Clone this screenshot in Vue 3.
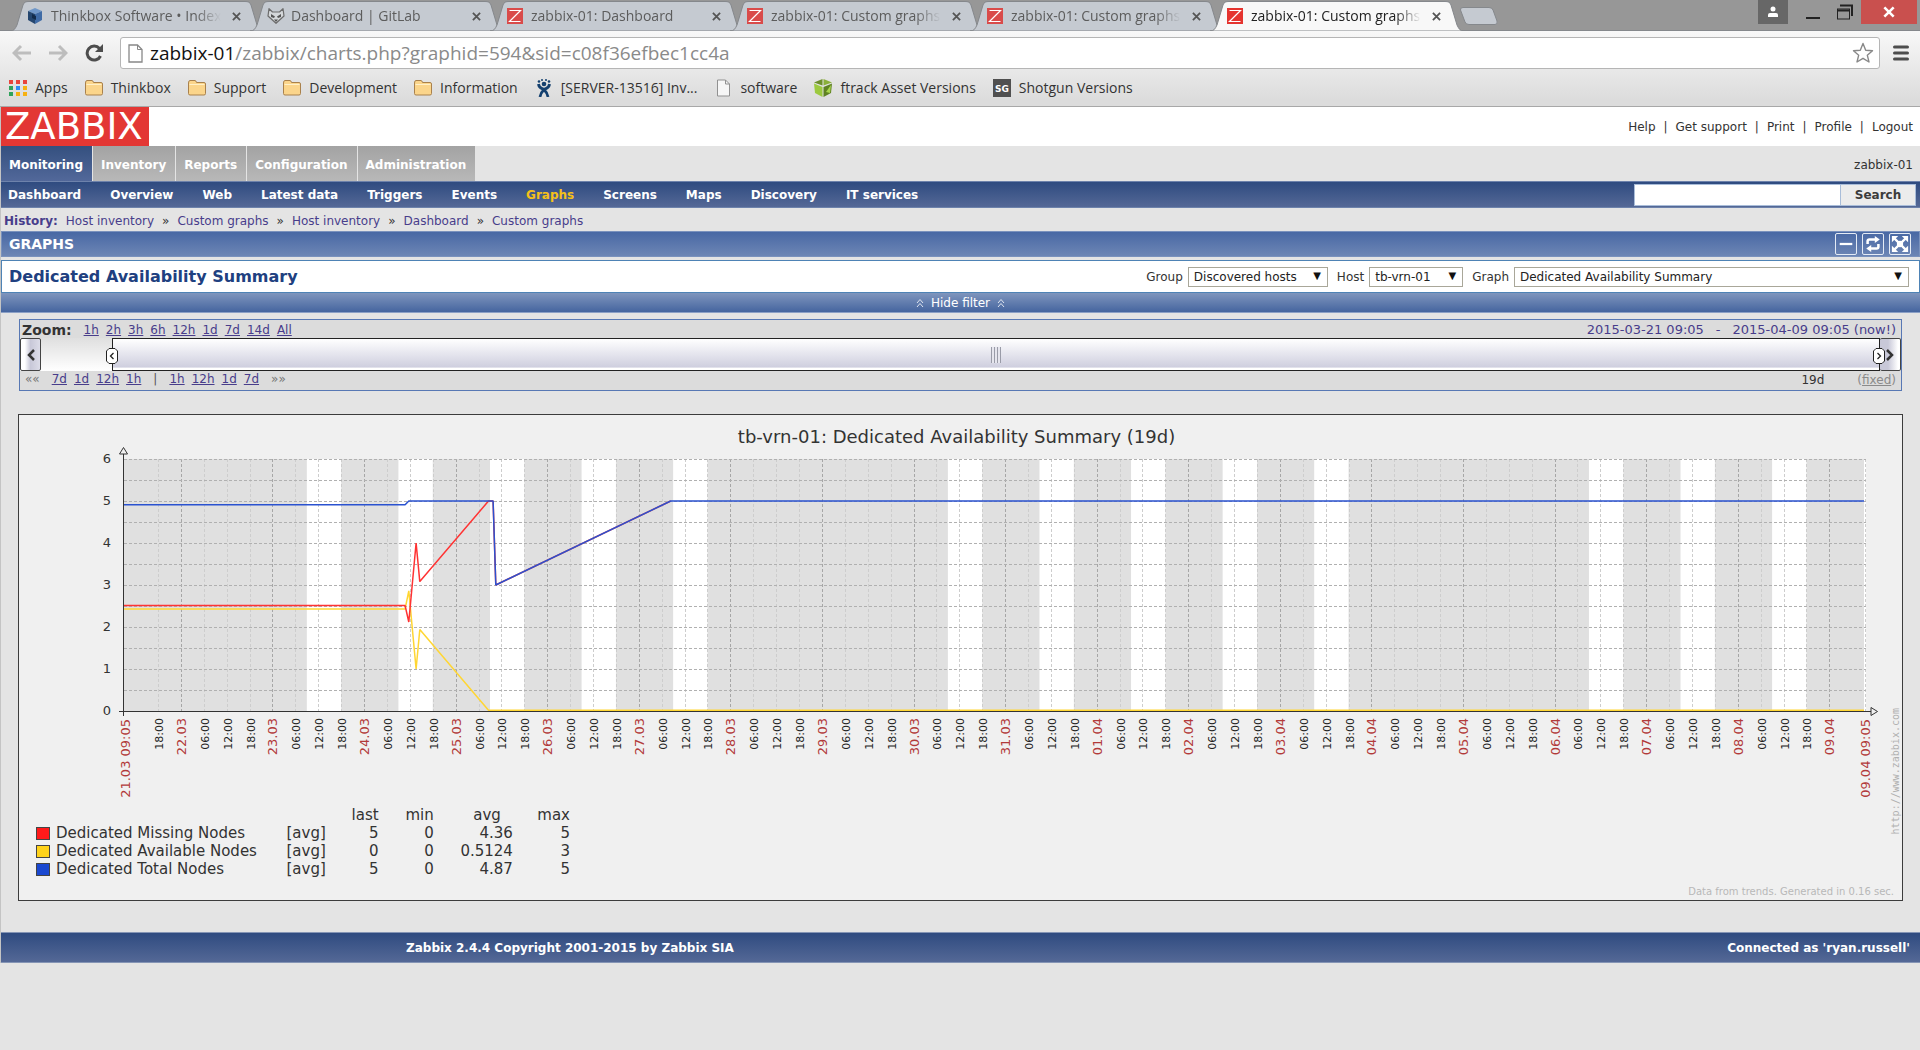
<script setup>
import { ref } from 'vue'

const tabs = [
  { title: 'Thinkbox Software • Index', icon: 'cube' },
  { title: 'Dashboard | GitLab', icon: 'gitlab' },
  { title: 'zabbix-01: Dashboard', icon: 'z' },
  { title: 'zabbix-01: Custom graphs', icon: 'z' },
  { title: 'zabbix-01: Custom graphs', icon: 'z' },
  { title: 'zabbix-01: Custom graphs', icon: 'z', active: true },
]

const bookmarks = [
  { label: 'Apps', icon: 'apps' },
  { label: 'Thinkbox', icon: 'folder' },
  { label: 'Support', icon: 'folder' },
  { label: 'Development', icon: 'folder' },
  { label: 'Information', icon: 'folder' },
  { label: '[SERVER-13516] Inv...', icon: 'jira' },
  { label: 'software', icon: 'page' },
  { label: 'ftrack Asset Versions', icon: 'ftrack' },
  { label: 'Shotgun Versions', icon: 'sg' },
]

const userLinks = ['Help', 'Get support', 'Print', 'Profile', 'Logout']
const sections = ['Monitoring', 'Inventory', 'Reports', 'Configuration', 'Administration']
const pages = [
  'Dashboard', 'Overview', 'Web', 'Latest data', 'Triggers', 'Events',
  'Graphs', 'Screens', 'Maps', 'Discovery', 'IT services',
]
const history = ['Host inventory', 'Custom graphs', 'Host inventory', 'Dashboard', 'Custom graphs']

const zoomLevels = ['1h', '2h', '3h', '6h', '12h', '1d', '7d', '14d', 'All']
const stepsBack = ['7d', '1d', '12h', '1h']
const stepsForward = ['1h', '12h', '1d', '7d']

const search = ref('')

/* Chart geometry: 19 days starting 21.03 09:05, values 0 to 6 */
const left = 105
const top = 14
const plotWidth = 1740
const unit = 42
const days = 19
const bottom = top + unit * 6
const startOffset = (9 + 5 / 60) / 24

const x = (d) => left + (d * plotWidth) / days
const y = (v) => bottom - v * unit
const snap = (n) => Math.round(n) + 0.5

const dateLabel = (n) => {
  const day = 21 + n
  return day > 31 ? `${String(day - 31).padStart(2, '0')}.04` : `${day}.03`
}

const ticks = []
for (let n = 0; n <= 19; n++) {
  for (const hour of [0, 6, 12, 18]) {
    const at = n + hour / 24 - startOffset
    if (at < 0.2 || at > 18.8) continue
    ticks.push({ at, major: hour === 0, label: hour ? `${String(hour).padStart(2, '0')}:00` : dateLabel(n) })
  }
}

const workDays = [2, 3, 4, 5, 6, 9, 10, 11, 12, 13, 16, 17, 18]
const workBands = workDays.map((n) => ({
  x: x(n + 9 / 24 - startOffset),
  width: (plotWidth / days) * (9 / 24),
}))

const levels = Array.from({ length: 12 }, (_, i) => (i + 1) / 2)

const line = (points) => points.map(([d, v]) => `${x(d).toFixed(1)},${y(v).toFixed(1)}`).join(' ')

const missing = line([[0, 2.51], [3.07, 2.51], [3.11, 2.12], [3.19, 4], [3.23, 3.08], [3.98, 5], [4.03, 5], [4.06, 3], [5.97, 5]])
const available = line([[0, 2.43], [3.07, 2.43], [3.11, 2.86], [3.19, 1], [3.23, 1.94], [3.98, 0.02], [19, 0.02]])
const total = line([[0, 4.91], [3.07, 4.91], [3.11, 5], [4.03, 5], [4.06, 3], [5.97, 5], [19, 5]])

const legend = [
  { name: 'Dedicated Missing Nodes', color: 'red', last: '5', min: '0', avg: '4.36', max: '5' },
  { name: 'Dedicated Available Nodes', color: 'yellow', last: '0', min: '0', avg: '0.5124', max: '3' },
  { name: 'Dedicated Total Nodes', color: 'blue', last: '5', min: '0', avg: '4.87', max: '5' },
]
</script>

<template>
  <div class="window">
    <header class="chrome">
      <div class="tabstrip">
        <div class="tabs">
          <div v-for="(tab, i) in tabs" :key="i" class="tab" :class="{ active: tab.active }">
            <svg class="tab-shape" viewBox="0 0 254 30" preserveAspectRatio="none" aria-hidden="true">
              <path d="M0 30C4 30 5 28 7 24L13 4C14 1 16 .5 19 .5H235C238 .5 240 1 241 4L247 24C249 28 250 30 254 30Z" />
            </svg>
            <svg v-if="tab.icon === 'cube'" class="fav" viewBox="0 0 16 16" aria-hidden="true">
              <path d="M8 0 15 3 8 6 1 3Z" fill="#6f97c9" />
              <path d="M1 3 8 6V16L1 12Z" fill="#24466f" />
              <path d="M15 3 8 6V16L15 12Z" fill="#3f6ba6" />
              <path d="M5 6 9 8V12L5 10Z" fill="#122b4a" />
            </svg>
            <svg v-else-if="tab.icon === 'gitlab'" class="fav wide" viewBox="0 0 18 16" aria-hidden="true">
              <path d="M2 .7 5.500 4H12.500L16 .7 17 8 9 15.300 1 8Z" fill="#d4d7da" stroke="#6c6c6c" stroke-width="1.200" stroke-linejoin="round" />
              <path d="M4 6 8 8.500 7 10 4 9ZM14 6 10 8.500 11 10 14 9ZM7 11.500H11L9 14Z" fill="#555" />
            </svg>
            <svg v-else class="fav" viewBox="0 0 16 16" aria-hidden="true">
              <rect width="16" height="16" :fill="tab.active ? '#e5342f' : '#d94b4a'" />
              <path d="M2.500 2.500H13.500L2.500 13.500H13.500" fill="none" stroke="#fff" stroke-width="1.200" />
            </svg>
            <span class="tab-title">{{ tab.title }}</span>
            <button class="tab-close" type="button" aria-label="Close tab">
              <svg viewBox="0 0 10 10"><path d="M1 1 9 9M9 1 1 9" stroke="#555" stroke-width="2" /></svg>
            </button>
          </div>
          <button class="new-tab" type="button" aria-label="New tab">
            <svg viewBox="0 0 40 20"><path d="M4 1.500H30Q33 1.500 34 4L38 15Q39 18.500 36 18.500H10Q7 18.500 6 16L1.500 4Q1 1.500 4 1.500Z" fill="#c5cad1" stroke="#85888c" /></svg>
          </button>
        </div>
        <div class="controls">
          <button class="user" type="button" aria-label="User">
            <svg viewBox="0 0 12 12"><circle cx="6" cy="3" r="2.500" fill="#fff" /><path d="M1 11V9Q1 7 3 7H9Q11 7 11 9V11Z" fill="#fff" /></svg>
          </button>
          <button class="min" type="button" aria-label="Minimize">
            <svg viewBox="0 0 14 14"><path d="M0 12H14" stroke="#222" stroke-width="2" /></svg>
          </button>
          <button class="max" type="button" aria-label="Restore">
            <svg viewBox="0 0 16 16"><path d="M3 1.500H15V12M1 6.500H12" fill="none" stroke="#222" stroke-width="2" /><rect x=".5" y="5" width="12" height="10" fill="none" stroke="#222" /></svg>
          </button>
          <button class="close" type="button" aria-label="Close">
            <svg viewBox="0 0 12 12"><path d="M2 2 10 10M10 2 2 10" stroke="#fff" stroke-width="2.200" /></svg>
          </button>
        </div>
      </div>

      <div class="toolbar">
        <button class="nav" type="button" aria-label="Back">
          <svg viewBox="0 0 20 18"><path d="M9 2 2 9 9 16M2 9H19" fill="none" stroke="#bdbdbd" stroke-width="3" /></svg>
        </button>
        <button class="nav" type="button" aria-label="Forward">
          <svg viewBox="0 0 20 18"><path d="M11 2 18 9 11 16M18 9H1" fill="none" stroke="#bdbdbd" stroke-width="3" /></svg>
        </button>
        <button class="nav" type="button" aria-label="Reload">
          <svg viewBox="0 0 20 18"><path d="M15.500 4.500A7 7 0 1 0 16.500 12" fill="none" stroke="#4d4d4d" stroke-width="3" /><path d="M19 0V8H11Z" fill="#4d4d4d" /></svg>
        </button>
        <div class="url">
          <svg class="doc" viewBox="0 0 15 19" aria-hidden="true"><path d="M1 1H9.500L14 5.500V18H1Z" fill="#fff" stroke="#888" stroke-width="1.300" /><path d="M9.500 1V5.500H14" fill="none" stroke="#888" /></svg>
          <span class="address"><b>zabbix-01</b>/zabbix/charts.php?graphid=594&amp;sid=c08f36efbec1cc4a</span>
          <svg class="star" viewBox="0 0 22 22" aria-hidden="true"><path d="M11 1.500 13.700 8.300 20.500 8.800 15.300 13.200 17 20 11 16.300 5 20 6.700 13.200 1.500 8.800 8.300 8.300Z" fill="#fff" stroke="#888" stroke-width="1.400" stroke-linejoin="round" /></svg>
        </div>
        <button class="menu" type="button" aria-label="Menu">
          <svg viewBox="0 0 16 16"><path d="M1.500 2H14.500M1.500 8H14.500M1.500 14H14.500" stroke="#4d4d4d" stroke-width="3" stroke-linecap="round" /></svg>
        </button>
      </div>

      <nav class="bookmarks">
        <a v-for="b in bookmarks" :key="b.label" href="#">
          <svg v-if="b.icon === 'apps'" viewBox="0 0 18 18">
            <path d="M0 1H4V5H0ZM7 1H11V5H7ZM14 1H18V5H14Z" fill="#e8453c" />
            <path d="M0 7H4V11H0ZM0 13H4V17H0Z" fill="#2fa35b" />
            <path d="M7 7H11V11H7Z" fill="#2f8df5" />
            <path d="M14 7H18V11H14ZM7 13H11V17H7ZM14 13H18V17H14Z" fill="#f6b111" />
          </svg>
          <svg v-else-if="b.icon === 'folder'" viewBox="0 0 18 18">
            <path d="M.5 4Q.5 1.500 2 1.500H7Q8 1.500 8.500 3.500H16Q17.500 3.500 17.500 5V14.500Q17.500 16 16 16H2Q.5 16 .5 14.500Z" fill="#fbd58b" stroke="#a9814c" />
            <path d="M1.500 5.500H16.500" stroke="#fff0c8" />
          </svg>
          <svg v-else-if="b.icon === 'jira'" viewBox="0 0 18 18">
            <g fill="#14406f"><circle cx="9" cy="5" r="2.300" /><circle cx="4" cy="2.500" r="1.300" /><circle cx="7" cy="1" r="1" /><circle cx="11" cy="1" r="1" /><circle cx="14" cy="2.500" r="1.300" /></g>
            <path d="M3.500 5C4 9.500 6.500 9 9 10.500C11.500 9 14 9.500 14.500 5M9 10.500C6.500 13 5.500 14 5 18M9 10.500C11.500 13 12.500 14 13 18" fill="none" stroke="#14406f" stroke-width="2.800" />
          </svg>
          <svg v-else-if="b.icon === 'page'" viewBox="0 0 18 18"><path d="M3.500 1H11.500L15.500 5V17H3.500Z" fill="#f6f6f6" stroke="#919191" /><path d="M11.500 1V5H15.500" fill="none" stroke="#919191" /></svg>
          <svg v-else-if="b.icon === 'ftrack'" viewBox="0 0 18 18">
            <path d="M8.500 0V6.500L0 3.500Z" fill="#6d8f2b" /><path d="M9.500 0V6.500L18 3.500Z" fill="#8bb03a" />
            <path d="M0 4.500 8.500 8V18L1 14Z" fill="#9cc93f" /><path d="M18 4.500 9.500 8V18L17 14Z" fill="#5f8222" /><path d="M17 6 12 13 16 14Z" fill="#a9d64c" />
          </svg>
          <svg v-else viewBox="0 0 20 20"><rect width="20" height="20" fill="#505050" /><text x="10" y="14" text-anchor="middle" class="sg">SG</text></svg>
          {{ b.label }}
        </a>
      </nav>
    </header>

    <main class="page">
      <div class="masthead">
        <a class="logo" href="#">ZABBIX</a>
        <nav class="user-links">
          <template v-for="(l, i) in userLinks" :key="l">
            <span v-if="i">|</span><a href="#">{{ l }}</a>
          </template>
        </nav>
      </div>

      <nav class="sections">
        <a v-for="(s, i) in sections" :key="s" href="#" :class="{ on: i === 0 }">{{ s }}</a>
        <span class="host">zabbix-01</span>
      </nav>

      <div class="subnav">
        <nav>
          <a v-for="p in pages" :key="p" href="#" :class="{ on: p === 'Graphs' }">{{ p }}</a>
        </nav>
        <form class="search" @submit.prevent>
          <input v-model="search" type="text" aria-label="Search" />
          <button type="submit">Search</button>
        </form>
      </div>

      <nav class="history">
        <b>History:</b>
        <template v-for="(h, i) in history" :key="i">
          <span v-if="i">»</span><a href="#">{{ h }}</a>
        </template>
      </nav>

      <div class="bar">
        <h1>GRAPHS</h1>
        <div class="bar-icons">
          <button type="button" aria-label="Hide menu"><svg viewBox="0 0 20 20"><path d="M3 10H17" stroke="#fff" stroke-width="2.500" /></svg></button>
          <button type="button" aria-label="Refresh"><svg viewBox="0 0 20 20"><path d="M4 10V7Q4 5 6 5H13M16 10V13Q16 15 14 15H7" fill="none" stroke="#fff" stroke-width="2.800" /><path d="M12 1 17.500 5 12 9ZM8 11 2.500 15 8 19Z" fill="#fff" /></svg></button>
          <button type="button" aria-label="Fullscreen"><svg viewBox="0 0 20 20"><path d="M1 1H8L1 8ZM19 1H12L19 8ZM1 19H8L1 12ZM19 19H12L19 12Z" fill="#fff" /><path d="M4 4 16 16M16 4 4 16" stroke="#fff" stroke-width="2.500" /><circle cx="10" cy="10" r="3.500" fill="#fff" /></svg></button>
        </div>
      </div>

      <div class="title-row">
        <h2>Dedicated Availability Summary</h2>
        <form class="pickers" @submit.prevent>
          <label for="group">Group</label>
          <span class="pick group"><select id="group"><option>Discovered hosts</option></select><i>▼</i></span>
          <label for="host">Host</label>
          <span class="pick host-pick"><select id="host"><option>tb-vrn-01</option></select><i>▼</i></span>
          <label for="graph">Graph</label>
          <span class="pick graph"><select id="graph"><option>Dedicated Availability Summary</option></select><i>▼</i></span>
        </form>
      </div>

      <button class="filter-toggle" type="button">
        <svg viewBox="0 0 8 10"><path d="M1 5 4 1.500 7 5M1 9 4 5.500 7 9" fill="none" stroke="#dfe5f0" /></svg>
        Hide filter
        <svg viewBox="0 0 8 10"><path d="M1 5 4 1.500 7 5M1 9 4 5.500 7 9" fill="none" stroke="#dfe5f0" /></svg>
      </button>

      <section class="timeline">
        <div class="zoom-row">
          <b>Zoom:</b>
          <a v-for="z in zoomLevels" :key="z" href="#">{{ z }}</a>
          <span class="range">
            <span>2015-03-21 09:05</span><span>-</span><span>2015-04-09 09:05 (now!)</span>
          </span>
        </div>
        <div class="slider">
          <button class="end start" type="button" aria-label="Earlier"><svg viewBox="0 0 10 14"><path d="M8 2 3 7 8 12" fill="none" stroke="#333" stroke-width="2.500" /></svg></button>
          <div class="thumb">
            <svg class="handle at-start" viewBox="0 0 12 16"><path d="M3 .5H9L11.500 3V13L9 15.500H3L.5 13V3Z" fill="#fff" stroke="#222" /><path d="M7.500 5 4.500 8 7.500 11" fill="none" stroke="#222" stroke-width="1.300" /></svg>
            <span class="grip"></span>
            <svg class="handle at-end" viewBox="0 0 12 16"><path d="M3 .5H9L11.500 3V13L9 15.500H3L.5 13V3Z" fill="#fff" stroke="#222" /><path d="M4.500 5 7.500 8 4.500 11" fill="none" stroke="#222" stroke-width="1.300" /></svg>
          </div>
          <button class="end stop" type="button" aria-label="Later"><svg viewBox="0 0 10 14"><path d="M2 2 7 7 2 12" fill="none" stroke="#333" stroke-width="2.500" /></svg></button>
        </div>
        <div class="step-row">
          <span class="arrows">««</span>
          <a v-for="s in stepsBack" :key="s" href="#">{{ s }}</a>
          <span class="sep">|</span>
          <a v-for="s in stepsForward" :key="s" href="#">{{ s }}</a>
          <span class="arrows">»»</span>
          <span class="span-length">19d</span>
          <span class="fixed">(<a href="#">fixed</a>)</span>
        </div>
      </section>

      <figure class="chart">
        <figcaption>tb-vrn-01: Dedicated Availability Summary (19d)</figcaption>
        <svg class="plot" viewBox="0 0 1883 361">
          <rect :x="left" :y="top" :width="plotWidth" :height="bottom - top" fill="#e0e0e0" />
          <rect v-for="(b, i) in workBands" :key="'b' + i" :x="b.x" :y="top" :width="b.width" :height="bottom - top" fill="#fff" />
          <rect :x="left + plotWidth" :y="top" width="2" :height="bottom - top" fill="#fff" />
          <line v-for="(t, i) in ticks" :key="'g' + i" :x1="snap(x(t.at))" :x2="snap(x(t.at))" :y1="top" :y2="bottom" :class="t.major ? 'grid-day' : 'grid-hour'" />
          <line :x1="left + plotWidth + 1.5" :x2="left + plotWidth + 1.5" :y1="top" :y2="bottom" class="grid-hour" />
          <line v-for="v in levels" :key="'l' + v" :x1="left" :x2="left + plotWidth + 2" :y1="snap(y(v))" :y2="snap(y(v))" class="grid-level" />

          <polyline :points="available" class="series yellow" />
          <polyline :points="missing" class="series red" />
          <polyline :points="total" class="series blue" />

          <path :d="`M${left - 0.5} 8V${bottom + 5}M${left - 5} ${bottom + 0.5}H${left + plotWidth + 8}`" class="axis" />
          <path :d="`M${left - 4.5} 9 ${left - 0.5} 2.500 ${left + 3.5} 9Z`" class="arrow" />
          <path :d="`M${left + plotWidth + 7} ${bottom - 3.5}L${left + plotWidth + 13.5} ${bottom + 0.5}L${left + plotWidth + 7} ${bottom + 4.5}Z`" class="arrow" />

          <text v-for="v in [0, 1, 2, 3, 4, 5, 6]" :key="'v' + v" :x="left - 13" :y="y(v) + 4" class="value">{{ v }}</text>
          <text v-for="(t, i) in ticks" :key="'t' + i" :transform="`translate(${Math.round(x(t.at)) + 5} 273) rotate(-90)`" :class="t.major ? 'date' : 'hour'">{{ t.label }}</text>
          <text :transform="`translate(${left + 6} 274) rotate(-90)`" class="date">21.03 09:05</text>
          <text :transform="`translate(${left + plotWidth + 6} 274) rotate(-90)`" class="date">09.04 09:05</text>
          <text transform="translate(1880 263) rotate(-90)" class="source">http://www.zabbix.com</text>
        </svg>
        <table class="legend">
          <thead>
            <tr><td></td><td></td><th>last</th><th>min</th><th class="avg-head">avg</th><th>max</th></tr>
          </thead>
          <tbody>
            <tr v-for="r in legend" :key="r.name">
              <td><span class="swatch" :class="r.color"></span>{{ r.name }}</td>
              <td>[avg]</td>
              <td>{{ r.last }}</td><td>{{ r.min }}</td><td>{{ r.avg }}</td><td>{{ r.max }}</td>
            </tr>
          </tbody>
        </table>
        <p class="note">Data from trends. Generated in 0.16 sec.</p>
      </figure>

      <footer>
        <span class="copyright">Zabbix 2.4.4 Copyright 2001-2015 by Zabbix SIA</span>
        <span>Connected as 'ryan.russell'</span>
      </footer>
    </main>
  </div>
</template>

<style>
body {
  margin: 0;
  background: #e4e4e4;
}
</style>

<style scoped>
* {
  box-sizing: border-box;
}
button {
  border: 0;
  padding: 0;
  background: none;
  display: flex;
  align-items: center;
  justify-content: center;
}
svg {
  display: block;
  flex: none;
}
a {
  color: inherit;
  text-decoration: none;
}
.window {
  min-height: 100vh;
  background: #e4e4e4;
  font: 12px/16px "DejaVu Sans", Verdana, sans-serif;
  color: #333;
}

/* Browser frame */
.chrome {
  font-family: "Open Sans", "Segoe UI", sans-serif;
  font-size: 14px;
  background: linear-gradient(#f8f8f8 31px, #dcdcdc 100px);
  border-bottom: 1px solid #a8a8a8;
}
.tabstrip {
  display: flex;
  justify-content: space-between;
  height: 31px;
  background: #979797;
  border-bottom: 1px solid #85888c;
}
.tabs {
  display: flex;
  flex: 1;
  min-width: 0;
  padding: 1px 0 0 10px;
}
.tab {
  position: relative;
  display: flex;
  align-items: center;
  flex: 0 1 240px;
  min-width: 0;
  height: 30px;
  padding: 0 4px 0 17px;
  color: #5c5c5c;
}
.tab.active {
  z-index: 1;
  color: #222;
}
.tab-shape {
  position: absolute;
  left: 0;
  top: 0;
  width: calc(100% + 14px);
  height: 30px;
}
.tab-shape path {
  fill: #c5cad1;
  stroke: #85888c;
}
.active .tab-shape path {
  fill: #f8f8f8;
}
.fav {
  position: relative;
  width: 16px;
  height: 16px;
  margin-right: 8px;
}
.fav.wide {
  width: 18px;
  margin-right: 6px;
}
.tab-title {
  position: relative;
  flex: 1;
  min-width: 0;
  margin-right: 5px;
  overflow: hidden;
  white-space: nowrap;
  line-height: 20px;
  mask-image: linear-gradient(90deg, #000 85%, transparent);
}
.tab-close {
  position: relative;
  width: 20px;
  height: 16px;
}
.tab-close svg {
  width: 9px;
  height: 9px;
}
.new-tab {
  width: 40px;
  height: 30px;
  margin-left: 9px;
}
.new-tab svg {
  width: 40px;
  height: 20px;
}
.controls {
  display: flex;
  margin-right: 3px;
}
.controls button {
  height: 24px;
}
.controls svg {
  width: 14px;
  height: 14px;
}
.controls .user {
  width: 30px;
  background: #676767;
}
.controls .user svg {
  width: 12px;
}
.controls .min {
  width: 49px;
  padding-top: 2px;
}
.controls .max {
  width: 24px;
  justify-content: flex-start;
}
.controls .max svg {
  width: 16px;
  height: 16px;
}
.controls .close {
  width: 56px;
  background: #c9504e;
}
.toolbar {
  display: flex;
  align-items: center;
  padding: 6px 11px 0 12px;
}
.nav {
  width: 20px;
  margin-right: 16px;
}
.nav svg {
  width: 20px;
  height: 18px;
}
.url {
  display: flex;
  align-items: center;
  flex: 1;
  min-width: 0;
  height: 32px;
  margin-right: 13px;
  padding: 0 5px 0 7px;
  background: #fff;
  border: 1px solid #b5b5b5;
  border-radius: 3px;
}
.doc {
  width: 15px;
  height: 19px;
}
.address {
  flex: 1;
  min-width: 0;
  padding-left: 7px;
  overflow: hidden;
  white-space: nowrap;
  font-size: 19px;
  line-height: 26px;
  color: #8a8a8a;
}
.address b {
  font-weight: 400;
  color: #111;
}
.star {
  width: 22px;
  height: 22px;
}
.menu svg {
  width: 16px;
  height: 16px;
}
.bookmarks {
  display: flex;
  gap: 17px;
  padding: 9px 9px 8px;
}
.bookmarks a {
  display: flex;
  align-items: center;
  gap: 8px;
  line-height: 20px;
  white-space: nowrap;
  color: #333;
}
.bookmarks svg {
  width: 18px;
  height: 18px;
}
.sg {
  font: bold 10px "DejaVu Sans", sans-serif;
  fill: #fff;
}

/* Zabbix header */
.page {
  border-left: 1px solid #c4c4c4;
}
.masthead {
  display: flex;
  justify-content: space-between;
  align-items: center;
  height: 39px;
  padding-right: 7px;
  background: #fff;
}
.logo {
  padding: 0 6px 0 4px;
  background: #e33734;
  color: #fff;
  font-size: 37px;
  line-height: 39px;
}
.user-links {
  display: flex;
  gap: 8px;
}
.sections {
  display: flex;
  align-items: stretch;
  gap: 1px;
  height: 35px;
  line-height: 38px;
}
.sections a {
  padding: 0 9px 0 8px;
  background: linear-gradient(#a3a3a3, #b8b8b8);
  color: #fff;
  font-weight: 700;
}
.sections a.on {
  background: linear-gradient(#34507f, #52689a);
}
.host {
  margin-left: auto;
  padding-right: 7px;
}
.subnav {
  display: flex;
  justify-content: space-between;
  align-items: center;
  height: 27px;
  padding: 0 4px 0 7px;
  background: linear-gradient(#2f4b80, #546896);
  border-top: 1px solid #6d82ab;
  border-bottom: 1px solid #6d82ab;
}
.subnav nav {
  display: flex;
  gap: 29px;
  color: #fff;
  font-weight: 700;
  white-space: nowrap;
}
.subnav .on {
  color: #f5c118;
}
.search {
  display: flex;
}
.search input {
  width: 207px;
  height: 22px;
  border: 1px solid #a9bdd9;
  background: #fff;
}
.search button {
  width: 75px;
  height: 22px;
  border: 1px solid #a9bdd9;
  border-left: 0;
  background: #ececec;
  color: #3c3c3c;
  font: bold 12px/16px "DejaVu Sans", Verdana, sans-serif;
}
.history {
  display: flex;
  gap: 8px;
  height: 23px;
  padding-left: 3px;
  line-height: 26px;
  color: #483d8b;
}
.history span {
  color: #333;
}
.bar {
  display: flex;
  justify-content: space-between;
  align-items: center;
  height: 26px;
  padding: 0 8px 0 7px;
  background: linear-gradient(#4868a4, #6d86b5);
  border: 1px solid #7a92bd;
}
.bar h1 {
  margin: 0;
  font-size: 14px;
  line-height: 18px;
  color: #fff;
}
.bar-icons {
  display: flex;
  gap: 5px;
}
.bar-icons button {
  width: 22px;
  height: 22px;
  border: 1px solid #e4ebf5;
  border-radius: 2px;
}
.bar-icons svg {
  width: 18px;
  height: 18px;
}
.title-row {
  display: flex;
  justify-content: space-between;
  align-items: center;
  height: 33px;
  margin-top: 3px;
  padding: 0 10px 0 7px;
  background: #fff;
  border: 1px solid #4e83b5;
}
.title-row h2 {
  margin: 0;
  font-size: 16px;
  line-height: 20px;
  color: #204080;
}
.pickers {
  display: flex;
  align-items: center;
}
.pickers label {
  margin: 0 5px 0 9px;
}
.pick {
  position: relative;
  display: flex;
}
.pick.group {
  width: 140px;
}
.pick.host-pick {
  width: 94px;
}
.pick.graph {
  width: 395px;
}
.pick select {
  appearance: none;
  width: 100%;
  height: 20px;
  padding: 0 5px;
  border: 1px solid #a9a799;
  border-radius: 0;
  background: #fff;
  color: #222;
  font: 12px/16px "DejaVu Sans", Verdana, sans-serif;
}
.pick i {
  position: absolute;
  right: 7px;
  top: 1px;
  font-style: normal;
  font-size: 10px;
  color: #111;
  pointer-events: none;
}
.filter-toggle {
  width: 100%;
  height: 20px;
  gap: 7px;
  background: linear-gradient(#7f95bd, #45659f);
  border-bottom: 1px solid #8ba0c6;
  color: #fff;
  font: 12px/16px "DejaVu Sans", Verdana, sans-serif;
}
.filter-toggle svg {
  width: 8px;
  height: 10px;
}

/* Time range selector */
.timeline {
  margin: 6px 18px 0;
  background: #dcdcdc;
  border: 1px solid #5878b4;
}
.zoom-row,
.step-row {
  display: flex;
  gap: 7px;
  height: 18px;
  padding: 0 5px 0 2px;
  line-height: 20px;
  color: #483d8b;
}
.zoom-row b {
  margin-right: 5px;
  font-size: 14px;
  color: #333;
}
.zoom-row a,
.step-row a {
  text-decoration: underline;
}
.range {
  display: flex;
  gap: 12px;
  margin-left: auto;
  font-size: 13px;
}
.slider {
  display: flex;
  height: 33px;
  background: linear-gradient(#dfdfdf, #fff);
}
.end {
  width: 21px;
  border: 1px solid #444;
  border-radius: 2px;
  background: linear-gradient(90deg, #fff 20%, #c8c8d8 50%, #dcdce8);
}
.end.stop {
  border-left: 0;
  background: linear-gradient(90deg, #c8c8d8 40%, #fff 90%);
}
.end svg {
  width: 10px;
  height: 14px;
}
.thumb {
  position: relative;
  display: flex;
  align-items: center;
  justify-content: center;
  flex: 1;
  margin-left: 71px;
  border: 1px solid #222;
  background: linear-gradient(#fff, #cfcfdf 90%, #fff 95%);
}
.handle {
  position: absolute;
  top: 9px;
  width: 12px;
  height: 16px;
}
.at-start {
  left: -7px;
}
.at-end {
  right: -6px;
}
.grip {
  width: 10px;
  height: 16px;
  background: repeating-linear-gradient(90deg, #9a9ca8 0 1px, #e6e6ee 1px 3px);
}
.step-row {
  height: 19px;
  line-height: 16px;
  padding-left: 5px;
}
.step-row .arrows {
  margin-right: 5px;
  color: #777;
}
.step-row .sep {
  margin: 0 5px;
  color: #555;
}
.step-row a + .arrows {
  margin-left: 5px;
}
.span-length {
  margin: 0 26px 0 auto;
  color: #333;
  line-height: 18px;
}
.fixed {
  color: #8a8a8a;
  line-height: 18px;
}

/* Graph */
.chart {
  margin: 23px 17px 0;
  background: #f0f0f0;
  border: 1px solid #3c3c3c;
}
.chart figcaption {
  padding: 12px 8px 0 0;
  text-align: center;
  font-size: 18px;
  line-height: 20px;
}
.plot {
  width: 100%;
  height: auto;
  margin-top: -2px;
  overflow: visible;
}
.grid-day {
  stroke: #a6a6a6;
  stroke-dasharray: 3 2;
}
.grid-hour {
  stroke: #cdcdcd;
  stroke-dasharray: 3 2;
}
.grid-level {
  stroke: #b0b0b0;
  stroke-dasharray: 3 2;
}
.axis {
  stroke: #333;
  fill: none;
}
.arrow {
  stroke: #333;
  fill: #f0f0f0;
}
.series {
  fill: none;
  stroke-width: 1.5;
  stroke-linejoin: bevel;
}
.series.red {
  stroke: #ff3333;
}
.series.yellow {
  stroke: #ffd633;
}
.series.blue {
  stroke: #2a52d0;
}
.value {
  font-size: 13px;
  text-anchor: end;
  fill: #333;
}
.date,
.hour {
  text-anchor: end;
}
.date {
  font-size: 13px;
  fill: #b23a3a;
}
.hour {
  font-size: 11px;
  fill: #222;
}
.source {
  font: 10px "DejaVu Sans Mono", monospace;
  text-anchor: end;
  fill: #b0b0b0;
}
.legend {
  margin-left: 17px;
  border-collapse: collapse;
  table-layout: fixed;
  width: 534px;
  font-size: 15px;
  line-height: 18px;
}
.legend td,
.legend th {
  width: 57px;
  padding: 0;
  height: 18px;
  text-align: right;
  font-weight: 400;
}
.legend td:first-child {
  width: 250px;
  text-align: left;
}
.legend td:nth-child(2) {
  width: 50px;
  text-align: left;
}
.legend th:nth-child(3) {
  width: 42px;
}
.legend th:nth-child(4) {
  width: 55px;
}
.legend th:nth-child(5) {
  width: 79px;
}
.legend .avg-head {
  padding-right: 12px;
}
.swatch {
  display: inline-block;
  width: 14px;
  height: 13px;
  margin-right: 6px;
  border: 1px solid #444;
  vertical-align: -2px;
}
.swatch.red {
  background: #ff1a1a;
}
.swatch.yellow {
  background: #ffd21a;
}
.swatch.blue {
  background: #1a48d0;
}
.note {
  margin: 8px 8px 2px;
  text-align: right;
  font-size: 10px;
  line-height: 12px;
  color: #b8b8b8;
}
footer {
  display: flex;
  justify-content: space-between;
  align-items: center;
  height: 31px;
  margin-top: 31px;
  padding: 0 10px 0 405px;
  background: linear-gradient(#2f4b80, #546896);
  border-top: 1px solid #8595b5;
  border-bottom: 1px solid #8595b5;
  color: #fff;
  font-weight: 700;
}
</style>
